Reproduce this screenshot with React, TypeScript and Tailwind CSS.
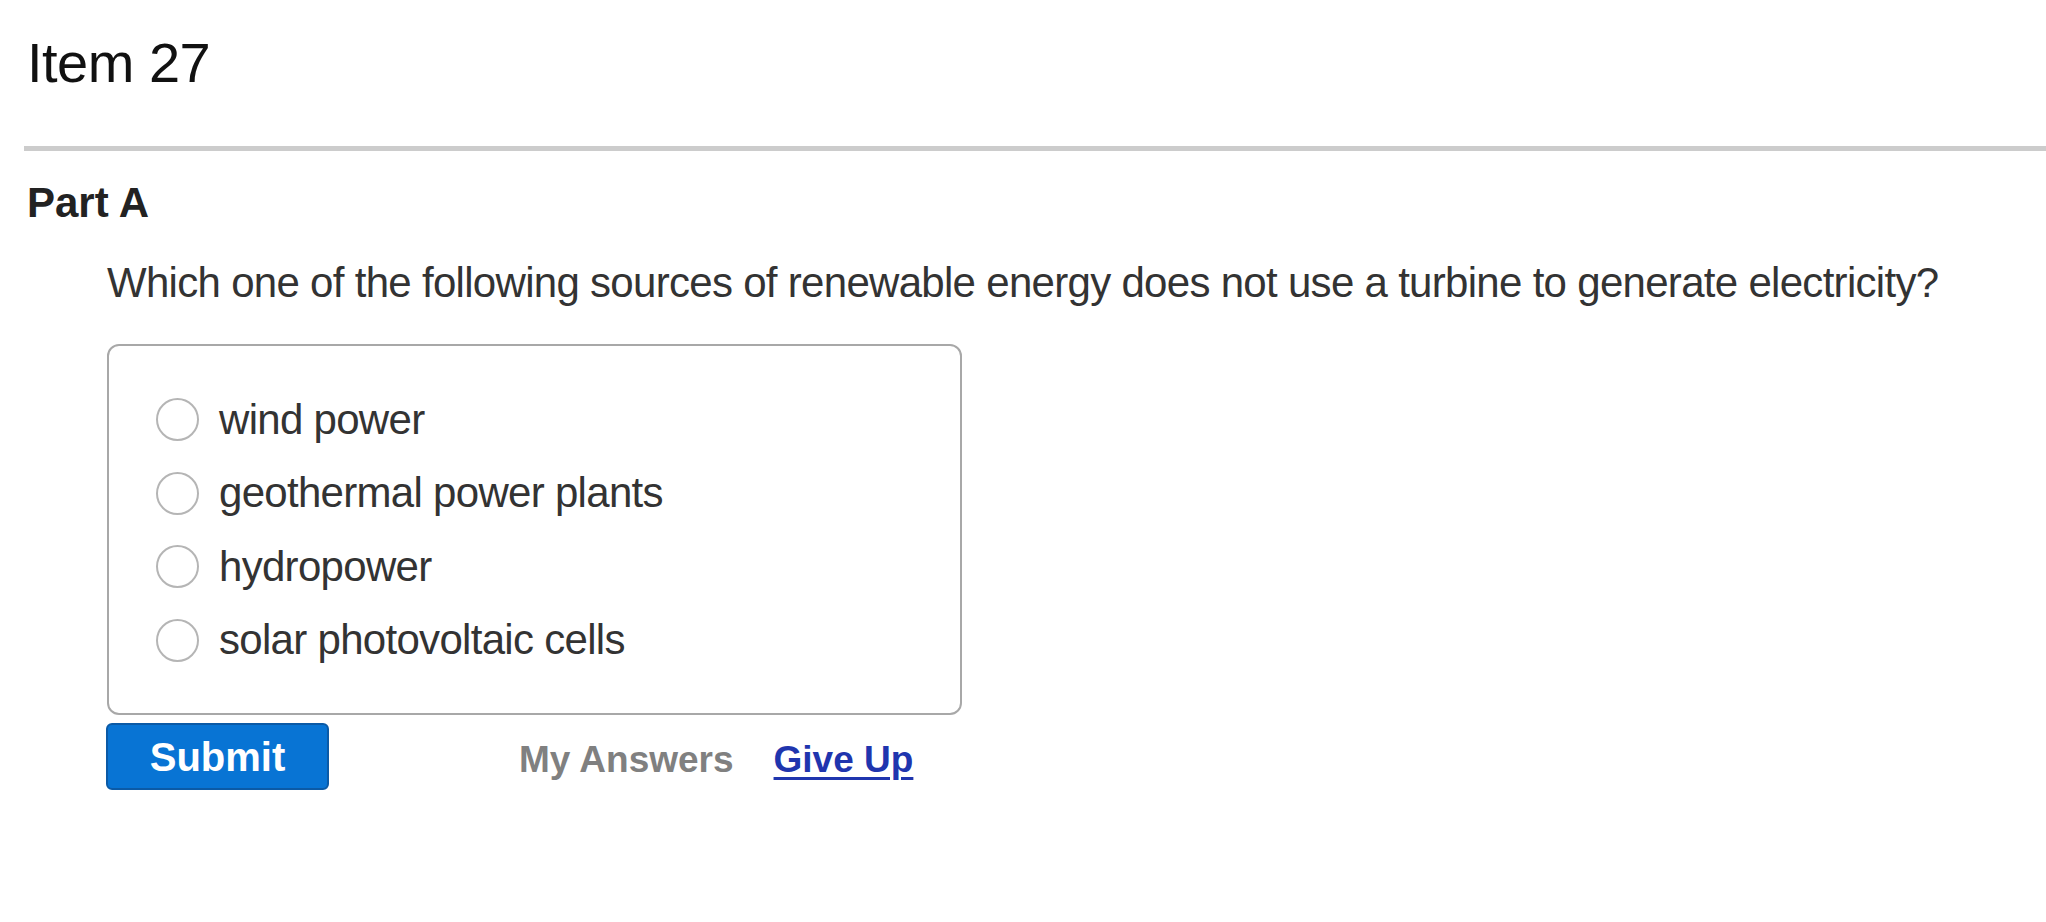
const options = [
  "wind power",
  "geothermal power plants",
  "hydropower",
  "solar photovoltaic cells",
];

function RadioOption({ label }: { label: string }) {
  return (
    <label className="flex h-[73.5px] cursor-pointer items-center gap-[20px]">
      <span className="size-[43px] shrink-0 rounded-full border-2 border-[#b5b5b5] bg-white" />
      <span className="text-[42px] leading-[42px] tracking-[-0.7px] text-[#333333]">
        {label}
      </span>
    </label>
  );
}

export default function App() {
  return (
    <div className="min-h-screen bg-white font-['Liberation_Sans',Arial,sans-serif]">
      <h1 className="pl-[27px] pt-[35px] text-[56px] leading-[56px] font-normal tracking-[-0.5px] text-[#111111]">
        Item 27
      </h1>
      <div className="ml-[24px] mt-[55px] h-[5px] bg-[#cccccc]" />

      <h2 className="mt-[31px] pl-[27px] text-[42px] leading-[42px] font-bold text-[#222222]">
        Part A
      </h2>

      <div className="pl-[107px]">
        <p className="mt-[38px] text-[42px] leading-[42px] tracking-[-0.7px] text-[#333333]">
          Which one of the following sources of renewable energy does not use a
          turbine to generate electricity?
        </p>

        <div className="mt-[40px] w-[855px] rounded-[12px] border-2 border-[#a8a8a8] pb-[36px] pl-[47px] pt-[37px]">
          {options.map((opt) => (
            <RadioOption key={opt} label={opt} />
          ))}
        </div>

        <div className="mt-[8px] flex items-center">
          <button className="-ml-px h-[67px] w-[223px] rounded-[6px] border-2 border-[#0b5aa6] bg-[#0874d4] text-[40px] leading-[40px] font-bold text-white">
            Submit
          </button>
          <span className="ml-[190px] mt-[5px] text-[37px] leading-[37px] font-bold text-[#808080]">
            My Answers
          </span>
          <a
            href="#"
            className="ml-[40px] mt-[5px] text-[37px] leading-[37px] font-bold text-[#1f35ae] underline decoration-[3px] underline-offset-[5px]"
          >
            Give Up
          </a>
        </div>
      </div>
    </div>
  );
}
